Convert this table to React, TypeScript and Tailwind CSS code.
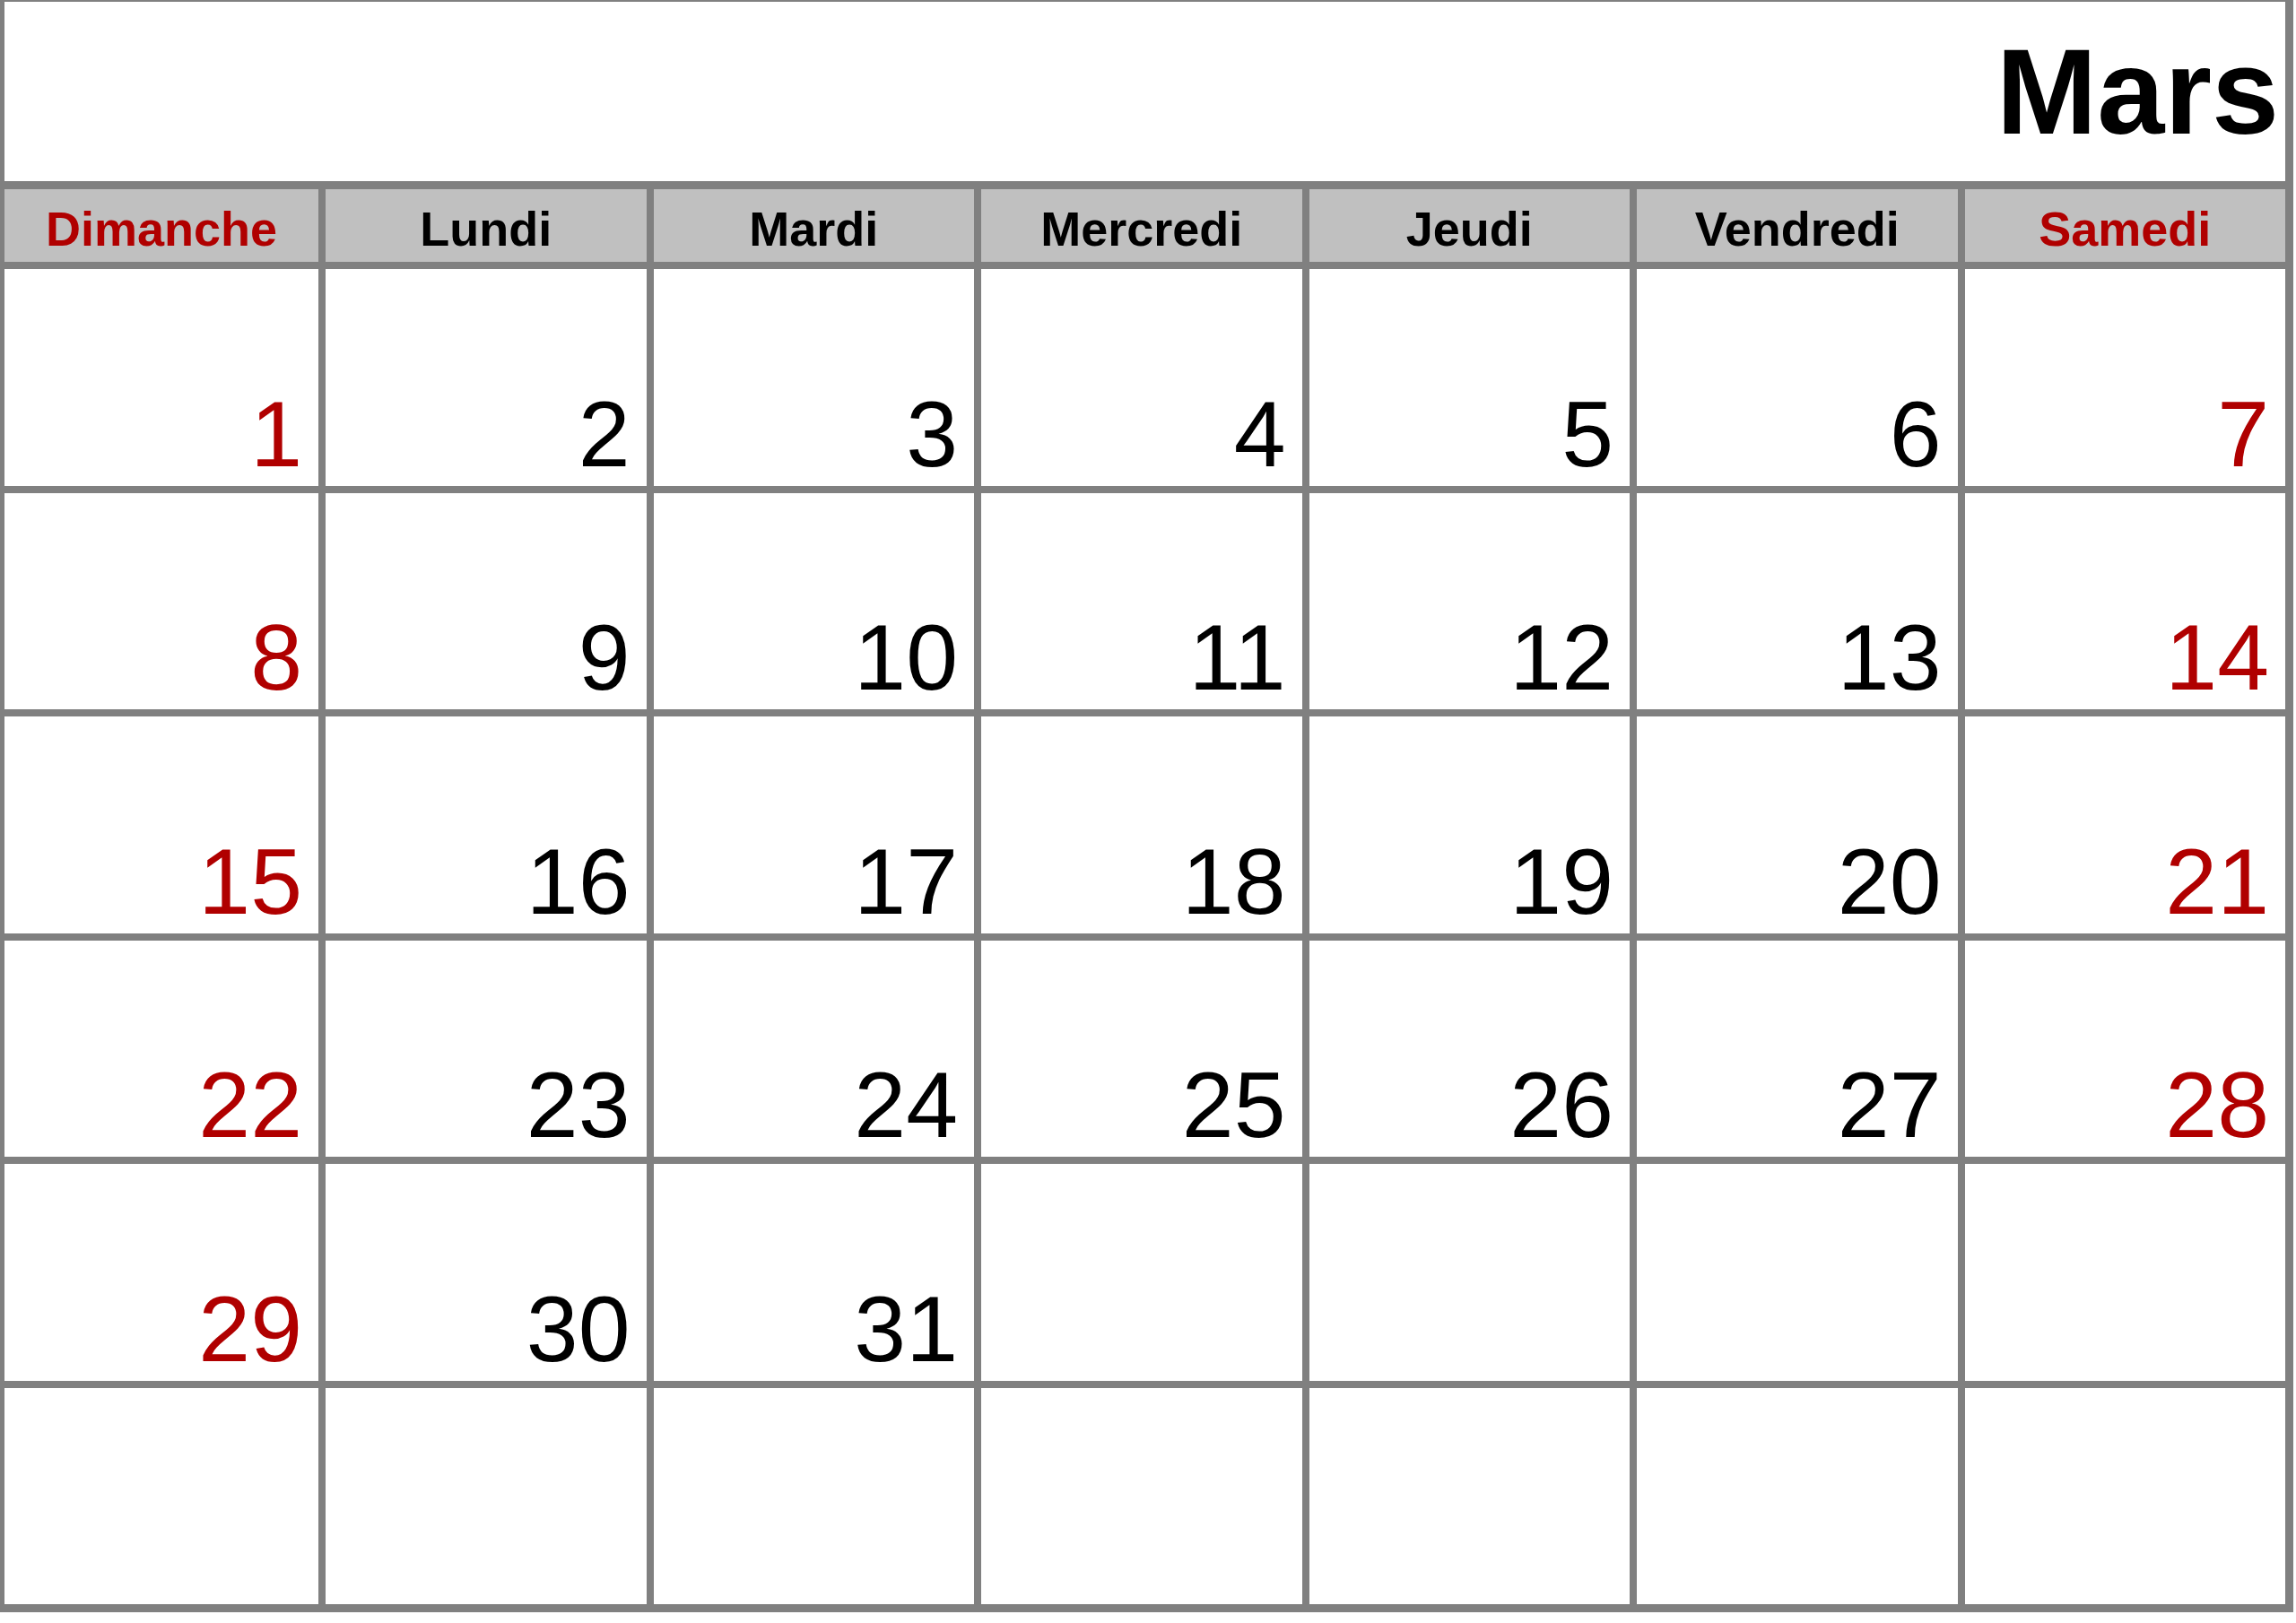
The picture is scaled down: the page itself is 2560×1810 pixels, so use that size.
import React from 'react';

const DAYS = ['Dimanche', 'Lundi', 'Mardi', 'Mercredi', 'Jeudi', 'Vendredi', 'Samedi'];

// mars commence un dimanche : 6 semaines de 7 cases
const CELLS: (number | null)[] = Array.from({ length: 42 }, (_, i) => (i < 31 ? i + 1 : null));

export default function App() {
  return (
    <div
      className="w-[2560px] h-[1810px] bg-white"
      style={{ fontFamily: '"Liberation Sans", Arial, sans-serif' }}
    >
      <div className="w-[2557px] h-[1798px] bg-[#808080] pt-[2px] pl-[5px] pr-[9px] pb-[9px] flex flex-col">
        {/* titre */}
        <div className="h-[200px] bg-white flex items-center justify-end pr-[7px]">
          <h1 className="text-[135px] leading-none font-bold text-black">Mars</h1>
        </div>

        {/* jours de la semaine */}
        <div className="mt-[9px] h-[81px] grid grid-cols-[350px_repeat(6,1fr)] gap-x-[8px]">
          {DAYS.map((d, i) => {
            const weekend = i === 0 || i === 6;
            return (
              <div
                key={d}
                className={`bg-[#c0c0c0] flex items-center justify-center pt-[6px] text-[54px] leading-none font-bold ${
                  weekend ? 'text-[#b00000]' : 'text-black'
                }`}
              >
                {d}
              </div>
            );
          })}
        </div>

        {/* cases */}
        <div className="mt-[8px] flex-1 grid grid-cols-[350px_repeat(6,1fr)] grid-rows-6 gap-[8px]">
          {CELLS.map((n, i) => {
            const col = i % 7;
            const weekend = col === 0 || col === 6;
            return (
              <div key={i} className="bg-white flex items-end justify-end pr-[18px] pb-[6px]">
                {n !== null && (
                  <span
                    className={`text-[104px] leading-none ${weekend ? 'text-[#b00000]' : 'text-black'}`}
                  >
                    {n}
                  </span>
                )}
              </div>
            );
          })}
        </div>
      </div>
    </div>
  );
}
